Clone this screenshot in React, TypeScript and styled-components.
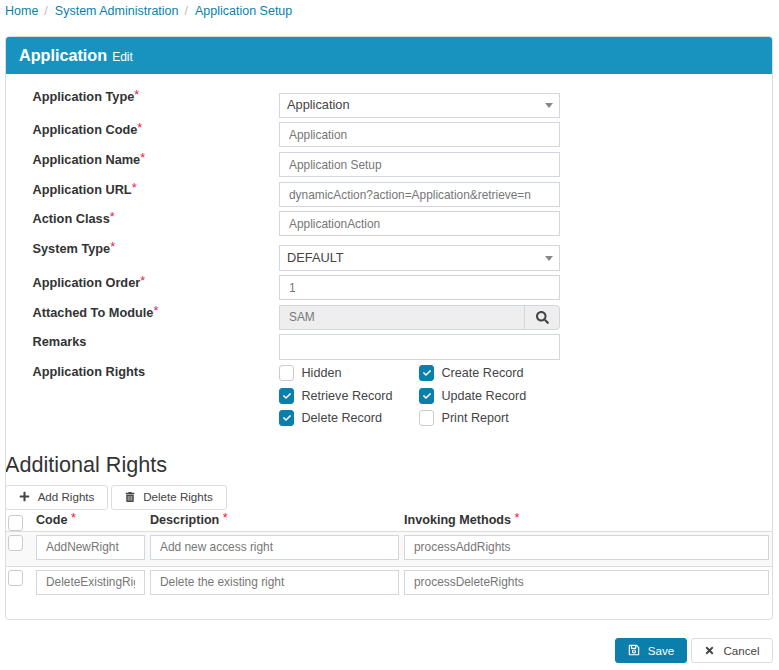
import React from "react";
import styled, { createGlobalStyle } from "styled-components";
import { FaCheck, FaPlus, FaRegSave, FaSearch, FaTimes, FaTrashAlt } from "react-icons/fa";

const Global = createGlobalStyle`
  html, body { margin: 0; padding: 0; background: #fff; }
  body { font-family: "Liberation Sans", Arial, sans-serif; color: #333; font-size: 13px; }
  * { box-sizing: border-box; }
`;

const Page = styled.div`
  width: 779px;
  height: 670px;
  padding: 0 6px 0 5px;
  overflow: hidden;
`;

const Crumbs = styled.nav`
  display: flex;
  align-items: center;
  height: 21px;
  font-size: 12.5px;
  color: #0b7fab;
`;

const Crumb = styled.a`
  color: #0b7fab;
  text-decoration: none;
`;

const Sep = styled.span`
  color: #bbb;
  padding: 0 7px 0 6px;
`;

const Panel = styled.section`
  margin-top: 15px;
  height: 584px;
  border: 1px solid #ddd;
  border-radius: 4px;
  background: #fff;
  overflow: hidden;
`;

const PanelHead = styled.header`
  display: flex;
  align-items: baseline;
  height: 37px;
  padding: 8px 13px 0;
  background: #1893bf;
  color: #fff;
`;

const PanelTitle = styled.h3`
  margin: 0;
  font-size: 16.2px;
  line-height: 20px;
  font-weight: 700;
`;

const PanelSub = styled.small`
  margin-left: 5px;
  font-size: 12px;
`;

const Form = styled.div`
  padding-top: 19px;
`;

const Row = styled.div<{ $gap: number }>`
  display: flex;
  margin-bottom: ${(p) => p.$gap}px;
  padding-left: 26px;
`;

const Label = styled.label<{ $shift: number }>`
  width: 247px;
  margin-top: ${(p) => p.$shift}px;
  padding-left: 0.5px;
  font-size: 12.75px;
  line-height: 16px;
  font-weight: 700;
  color: #333;
`;

const Star = styled.span`
  color: #f0143c;
  font-weight: 400;
  position: relative;
  top: -2px;
`;

const Control = styled.div`
  width: 281px;
`;

const Input = styled.input<{ $h?: number }>`
  display: block;
  width: 100%;
  height: ${(p) => p.$h ?? 25}px;
  padding: 0 9px;
  border: 1px solid #d2d6de;
  background: #fff;
  font: 11.9px "Liberation Sans", Arial, sans-serif;
  color: #777;
  outline: none;
`;

const Select = styled.div<{ $h: number }>`
  display: flex;
  align-items: center;
  justify-content: space-between;
  height: ${(p) => p.$h}px;
  padding: 0 6px 2px 7px;
  border: 1px solid #d2d6de;
  font-size: 12.8px;
  color: #444;
`;

const Caret = styled.span`
  width: 0;
  height: 0;
  margin-top: 2px;
  border-left: 4px solid transparent;
  border-right: 4px solid transparent;
  border-top: 5px solid #888;
`;

const Lookup = styled.div`
  display: flex;
  height: 25px;
  border: 1px solid #d2d6de;
  border-radius: 0 4px 4px 0;
  background: #eee;
`;

const LookupValue = styled.span`
  flex: 1;
  padding: 0 9px;
  font-size: 11.9px;
  line-height: 23px;
  color: #777;
`;

const LookupButton = styled.span`
  display: flex;
  align-items: center;
  justify-content: center;
  width: 35px;
  border-left: 1px solid #d2d6de;
  color: #444;
  font-size: 13px;
`;

const Checks = styled.div`
  display: grid;
  grid-template-columns: 140px 141px;
  grid-auto-rows: 22.5px;
  margin-top: -2px;
`;

const CheckItem = styled.span`
  display: flex;
  align-items: center;
  gap: 7.5px;
  font-size: 12.6px;
  color: #444;
`;

const Box = styled.span<{ $on?: boolean }>`
  display: inline-flex;
  align-items: center;
  justify-content: center;
  flex: none;
  width: 15px;
  height: 16px;
  border: 1px solid ${(p) => (p.$on ? "#0b7fab" : "#ccc")};
  border-radius: 3px;
  background: ${(p) => (p.$on ? "#0b7fab" : "#fff")};
  color: #fff;
  font-size: 8px;
`;

const SectionTitle = styled.h3`
  margin: 23px 0 8px -1px;
  font-size: 21.6px;
  line-height: 24px;
  font-weight: 400;
  color: #333;
`;

const Toolbar = styled.div`
  display: flex;
  gap: 3px;
  margin-left: -1px;
`;

const Button = styled.button<{ $primary?: boolean; $w: number; $icon?: number }>`
  display: inline-flex;
  align-items: center;
  justify-content: center;
  gap: 8px;
  width: ${(p) => p.$w}px;
  height: 25px;
  padding: 0 0 1px;
  border: 1px solid ${(p) => (p.$primary ? "#0b7fab" : "#ddd")};
  border-radius: 3px;
  background: ${(p) => (p.$primary ? "#0b7fab" : "#fff")};
  color: ${(p) => (p.$primary ? "#fff" : "#444")};
  font: 11.6px "Liberation Sans", Arial, sans-serif;

  svg {
    font-size: ${(p) => p.$icon ?? 11}px;
  }
`;

const RightsGrid = styled.div`
  display: grid;
  grid-template-columns: 109px 249px 365px;
  column-gap: 5px;
  padding: 0 3px 0 30px;
  position: relative;
`;

const RightsHead = styled(RightsGrid)`
  height: 22px;
  padding-top: 2px;
  border-bottom: 1px solid #ddd;
  font-weight: 700;
  font-size: 12.6px;
  line-height: 16px;
`;

const RightsRow = styled(RightsGrid)<{ $shaded?: boolean }>`
  height: 35px;
  padding-top: 3px;
  background: ${(p) => (p.$shaded ? "#f9f9f9" : "#fff")};
  border-bottom: 1px solid ${(p) => (p.$shaded ? "#ddd" : "transparent")};
`;

const RowCheck = styled.span<{ $top: number }>`
  position: absolute;
  left: 2px;
  top: ${(p) => p.$top}px;
  display: flex;
`;

const Actions = styled.div`
  display: flex;
  justify-content: flex-end;
  gap: 4px;
  margin-top: 18px;
`;

const fields: { label: string; value: string; gap: number }[] = [
  { label: "Application Code", value: "Application", gap: 5 },
  { label: "Application Name", value: "Application Setup", gap: 5 },
  { label: "Application URL", value: "dynamicAction?action=Application&retrieve=n", gap: 4 },
  { label: "Action Class", value: "ApplicationAction", gap: 9 },
];

const rows = [
  { code: "AddNewRight", desc: "Add new access right", method: "processAddRights", shaded: true },
  { code: "DeleteExistingRight", desc: "Delete the existing right", method: "processDeleteRights", shaded: false },
];

const checks = [
  { text: "Hidden", on: false },
  { text: "Create Record", on: true },
  { text: "Retrieve Record", on: true },
  { text: "Update Record", on: true },
  { text: "Delete Record", on: true },
  { text: "Print Report", on: false },
];

export default function App() {
  return (
    <Page>
      <Global />
      <Crumbs>
        <Crumb>Home</Crumb>
        <Sep>/</Sep>
        <Crumb>System Administration</Crumb>
        <Sep>/</Sep>
        <Crumb>Application Setup</Crumb>
      </Crumbs>
      <Panel>
        <PanelHead>
          <PanelTitle>Application</PanelTitle>
          <PanelSub>Edit</PanelSub>
        </PanelHead>
        <Form>
          <Row $gap={4}>
            <Label $shift={-4}>Application Type<Star>*</Star></Label>
            <Control>
              <Select $h={25}>Application<Caret /></Select>
            </Control>
          </Row>
          {fields.map((f) => (
            <Row key={f.label} $gap={f.gap}>
              <Label $shift={0}>{f.label}<Star>*</Star></Label>
              <Control>
                <Input readOnly defaultValue={f.value} />
              </Control>
            </Row>
          ))}
          <Row $gap={4}>
            <Label $shift={-4}>System Type<Star>*</Star></Label>
            <Control>
              <Select $h={26}>DEFAULT<Caret /></Select>
            </Control>
          </Row>
          <Row $gap={5}>
            <Label $shift={0}>Application Order<Star>*</Star></Label>
            <Control>
              <Input readOnly defaultValue="1" />
            </Control>
          </Row>
          <Row $gap={4}>
            <Label $shift={0}>Attached To Module<Star>*</Star></Label>
            <Control>
              <Lookup>
                <LookupValue>SAM</LookupValue>
                <LookupButton><FaSearch /></LookupButton>
              </Lookup>
            </Control>
          </Row>
          <Row $gap={4}>
            <Label $shift={0}>Remarks</Label>
            <Control>
              <Input readOnly defaultValue="" $h={26} />
            </Control>
          </Row>
          <Row $gap={0}>
            <Label $shift={0}>Application Rights</Label>
            <Control>
              <Checks>
                {checks.map((c) => (
                  <CheckItem key={c.text}>
                    <Box $on={c.on}>{c.on && <FaCheck />}</Box>
                    {c.text}
                  </CheckItem>
                ))}
              </Checks>
            </Control>
          </Row>
        </Form>
        <SectionTitle>Additional Rights</SectionTitle>
        <Toolbar>
          <Button $w={103} $icon={11}><FaPlus />Add Rights</Button>
          <Button $w={116} $icon={10}><FaTrashAlt />Delete Rights</Button>
        </Toolbar>
        <RightsHead>
          <RowCheck $top={5}><Box /></RowCheck>
          <span>Code <Star>*</Star></span>
          <span>Description <Star>*</Star></span>
          <span>Invoking Methods <Star>*</Star></span>
        </RightsHead>
        {rows.map((r) => (
          <RightsRow key={r.code} $shaded={r.shaded}>
            <RowCheck $top={3}><Box /></RowCheck>
            <Input readOnly defaultValue={r.code} />
            <Input readOnly defaultValue={r.desc} />
            <Input readOnly defaultValue={r.method} />
          </RightsRow>
        ))}
      </Panel>
      <Actions>
        <Button $primary $w={72} $icon={12}><FaRegSave />Save</Button>
        <Button $w={82} $icon={11}><FaTimes />Cancel</Button>
      </Actions>
    </Page>
  );
}
